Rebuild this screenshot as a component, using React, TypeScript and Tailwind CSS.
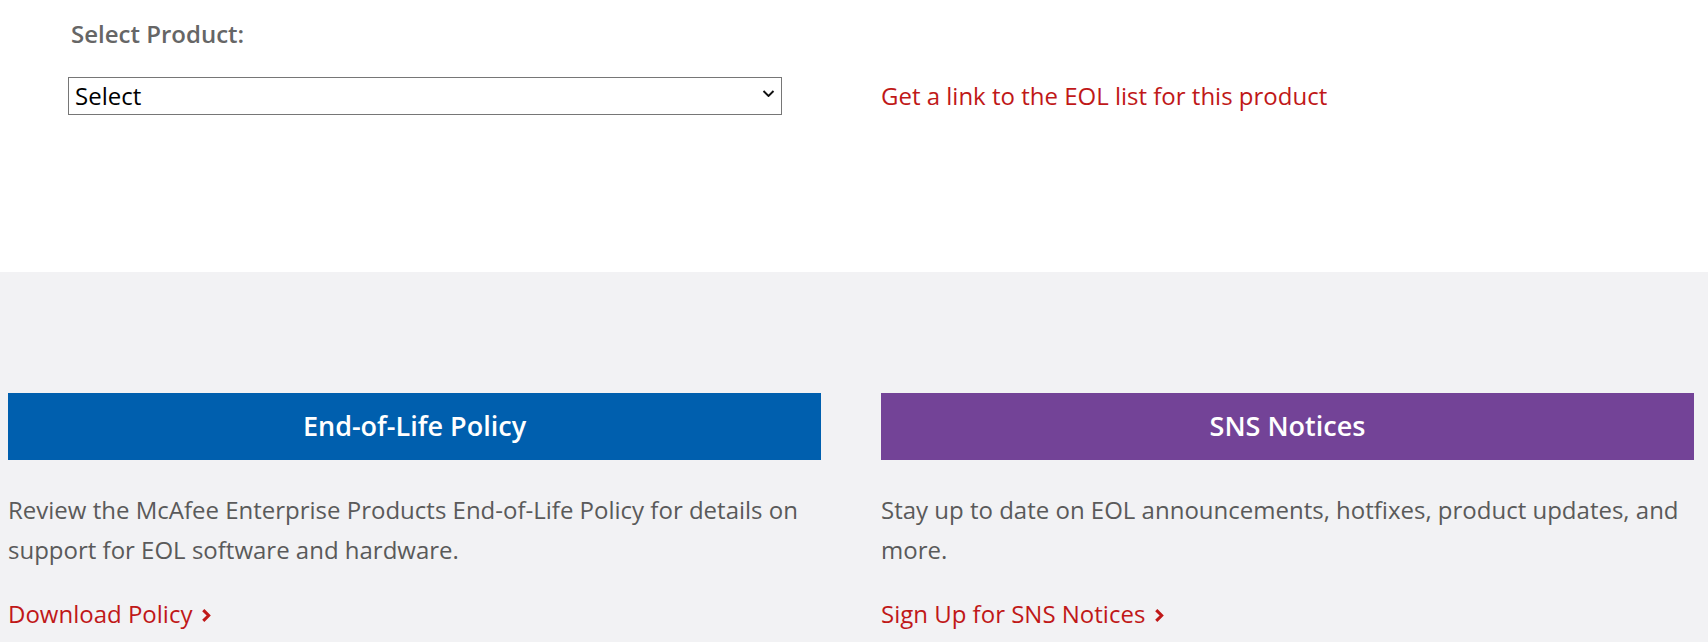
import React from "react";

function Chevron({ className }: { className?: string }) {
  return (
    <svg viewBox="0 0 8 12" className={className} fill="none" stroke="currentColor" strokeWidth="2.8" strokeLinecap="square">
      <polyline points="2,2 6,6 2,10" />
    </svg>
  );
}

export default function App() {
  const font = { fontFamily: '"Open Sans", "Noto Sans", sans-serif' };
  return (
    <div className="w-[1708px] min-h-[642px] bg-white" style={font}>
      {/* Top section */}
      <div className="h-[272px] bg-white pl-[8px]">
        <div className="grid grid-cols-[813px_813px] gap-x-[60px]">
          <div className="pl-[60px] pr-[39px] pt-[18px]">
            <div className="text-[24px] leading-[32px] font-semibold text-[#666666] pl-[3px]">
              Select Product:
            </div>
            <div className="relative mt-[27px]">
              <select
                className="w-full h-[38px] appearance-none border border-[#767676] bg-white pl-[6px] pr-[40px] py-0 text-[24px] leading-[32px] text-black outline-none rounded-none"
                defaultValue="Select"
              >
                <option>Select</option>
              </select>
              <svg
                viewBox="0 0 12 7"
                className="pointer-events-none absolute right-[7px] top-[13px] w-[13px] h-[7px]"
                fill="none"
                stroke="#111"
                strokeWidth="1.9"
              >
                <polyline points="1,1 6,6 11,1" />
              </svg>
            </div>
          </div>
          <div className="pt-[80px]">
            <a href="#" className="text-[24px] leading-[32px] text-[#c01818]">
              Get a link to the EOL list for this product
            </a>
          </div>
        </div>
      </div>

      {/* Gray section */}
      <div className="bg-[#f2f2f4] pl-[8px] pt-[121px] pb-[40px]">
        <div className="grid grid-cols-[813px_813px] gap-x-[60px]">
          <div>
            <div className="h-[67px] bg-[#005fae] flex items-center justify-center">
              <h2 className="text-[27px] font-semibold text-white leading-none pb-[2px]">End-of-Life Policy</h2>
            </div>
            <p className="mt-[30px] text-[24px] leading-[40px] text-[#5a5a5a]">
              Review the McAfee Enterprise Products End-of-Life Policy for details on support for EOL software and hardware.
            </p>
            <a href="#" className="mt-[24px] flex items-center gap-[10px] text-[24px] leading-[40px] text-[#c01818]">
              <span>Download Policy</span>
              <Chevron className="w-[9px] h-[13px] mt-[3px]" />
            </a>
          </div>
          <div>
            <div className="h-[67px] bg-[#734397] flex items-center justify-center">
              <h2 className="text-[27px] font-semibold text-white leading-none pb-[2px]">SNS Notices</h2>
            </div>
            <p className="mt-[30px] text-[24px] leading-[40px] text-[#5a5a5a]">
              Stay up to date on EOL announcements, hotfixes, product updates, and more.
            </p>
            <a href="#" className="mt-[24px] flex items-center gap-[10px] text-[24px] leading-[40px] text-[#c01818]">
              <span>Sign Up for SNS Notices</span>
              <Chevron className="w-[9px] h-[13px] mt-[3px]" />
            </a>
          </div>
        </div>
      </div>
    </div>
  );
}
